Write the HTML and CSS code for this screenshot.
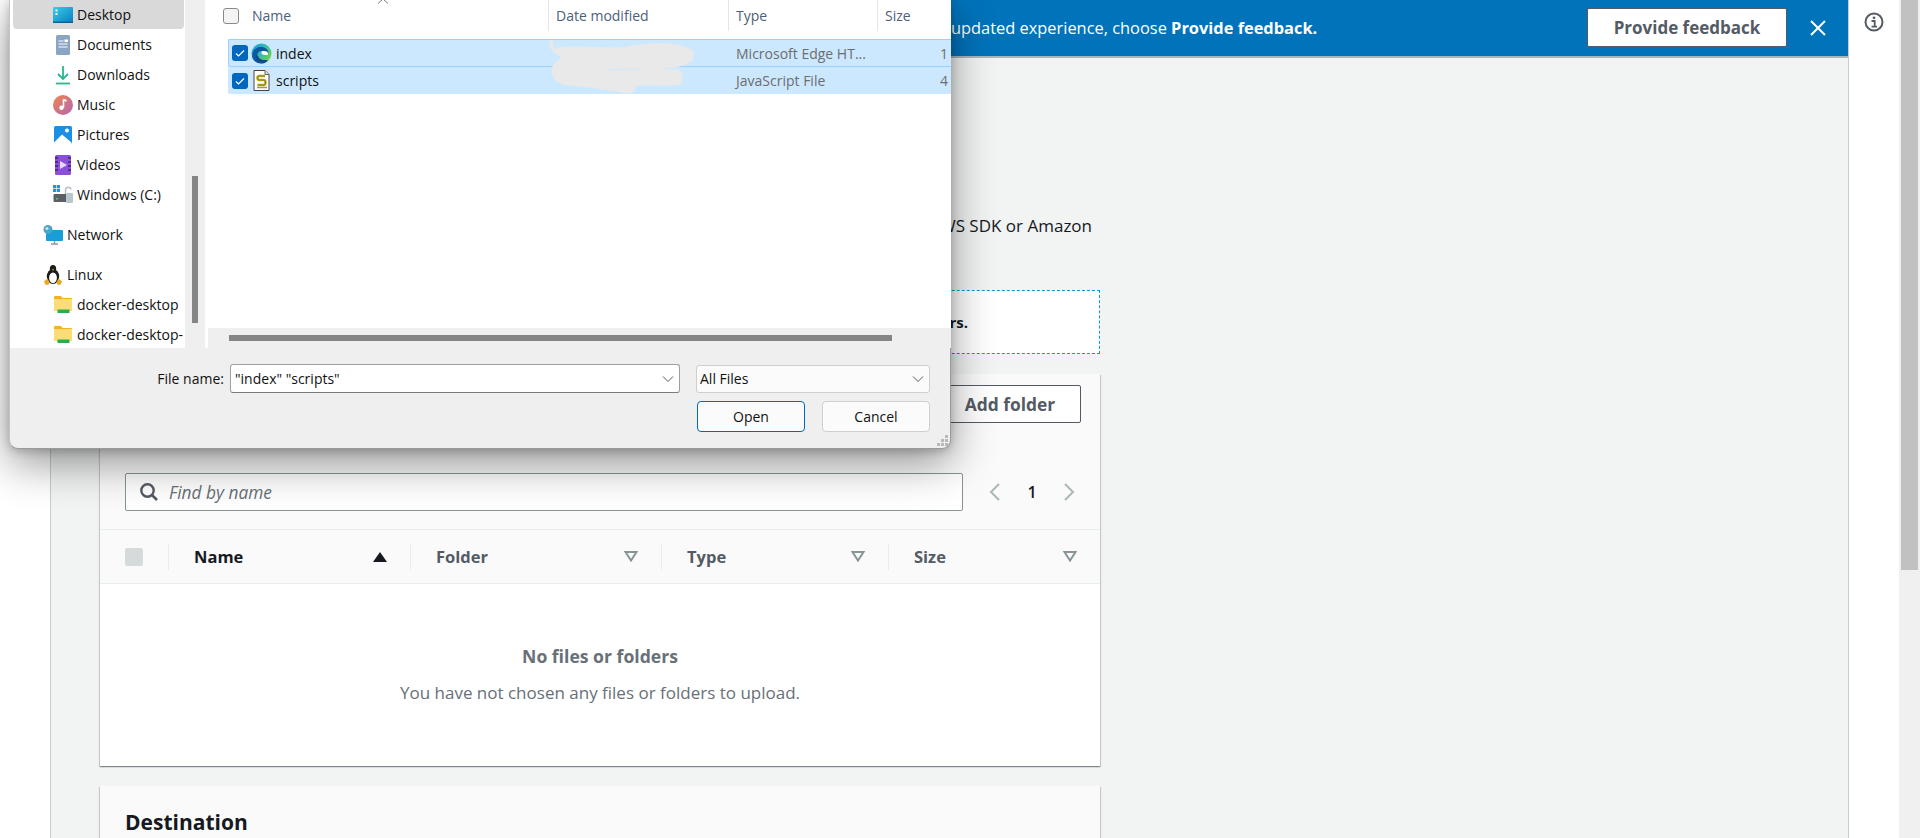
FILE: index.html
```html
<!DOCTYPE html>
<html lang="en">
<head>
<meta charset="utf-8">
<title>Upload</title>
<link rel="stylesheet" href="styles.css">
</head>
<body>
<div class="page">
  <div class="rail-left"></div>
  <main class="main">
    <div class="banner">
      <p class="banner-text">updated experience, choose <b>Provide feedback.</b></p>
      <button class="banner-btn">Provide feedback</button>
      <svg class="banner-x" width="18" height="18" viewBox="0 0 18 18"><path d="M2 2l14 14M16 2L2 16" fill="none" stroke="#fff" stroke-width="2"/></svg>
    </div>
    <div class="content">
      <p class="intro">AWS SDK or Amazon</p>
      <div class="drop"><b>rs.</b></div>
      <section class="card files">
        <div class="files-top">
          <div class="files-head">
            <div class="files-title">
              <p>All files and folders in this table will be uploaded.</p>
            </div>
            <button class="add-folder">Add folder</button>
          </div>
          <div class="search-row">
            <div class="search">
              <svg width="20" height="20" viewBox="0 0 20 20"><circle cx="8.500" cy="8.500" r="6.200" fill="none" stroke="#545b64" stroke-width="2.400"/><path d="M13 13l5 5" stroke="#545b64" stroke-width="2.600"/></svg>
              <span>Find by name</span>
            </div>
            <div class="pager">
              <svg width="14" height="20" viewBox="0 0 14 20"><path d="M11 2L3 10l8 8" fill="none" stroke="#aab7b8" stroke-width="2"/></svg>
              <b>1</b>
              <svg width="14" height="20" viewBox="0 0 14 20"><path d="M3 2l8 8-8 8" fill="none" stroke="#aab7b8" stroke-width="2"/></svg>
            </div>
          </div>
        </div>
        <div class="thead">
          <div class="th th-check"><i class="fake-check"></i></div>
          <div class="th th-name"><span>Name</span><svg width="14" height="10" viewBox="0 0 14 10"><path d="M7 0l7 10H0z" fill="#16191f"/></svg></div>
          <div class="th th-folder"><span>Folder</span><svg class="filter" width="14" height="11" viewBox="0 0 14 11"><path d="M1.500 1h11L7 9.500z" fill="none" stroke="#879596" stroke-width="2"/></svg></div>
          <div class="th th-type"><span>Type</span><svg class="filter" width="14" height="11" viewBox="0 0 14 11"><path d="M1.500 1h11L7 9.500z" fill="none" stroke="#879596" stroke-width="2"/></svg></div>
          <div class="th th-size"><span>Size</span><svg class="filter" width="14" height="11" viewBox="0 0 14 11"><path d="M1.500 1h11L7 9.500z" fill="none" stroke="#879596" stroke-width="2"/></svg></div>
        </div>
        <div class="empty">
          <b>No files or folders</b>
          <p>You have not chosen any files or folders to upload.</p>
        </div>
      </section>
      <section class="card dest">
        <h2>Destination</h2>
      </section>
    </div>
  </main>
  <aside class="rail-right">
    <svg class="info" width="20" height="20" viewBox="0 0 20 20"><circle cx="10" cy="10" r="8.500" fill="none" stroke="#545b64" stroke-width="2"/><circle cx="10" cy="5.800" r="1.400" fill="#545b64"/><path d="M7.500 9h3.200v5.200M7.500 14.600h5.500" fill="none" stroke="#545b64" stroke-width="1.800"/></svg>
  </aside>
  <div class="page-scroll"><div class="page-thumb"></div></div>
</div>

<div class="dialog">
  <div class="dlg-top">
    <nav class="nav">
      <div class="nav-item sub sel">
        <svg width="20" height="16" viewBox="0 0 20 16"><defs><linearGradient id="gd" x1="0" y1="0" x2="1" y2="1"><stop offset="0" stop-color="#35d0e8"/><stop offset="1" stop-color="#0a7cc0"/></linearGradient></defs><rect width="20" height="16" rx="1" fill="url(#gd)"/><rect x="2.500" y="2.500" width="2" height="2" fill="#fff"/><rect x="2.500" y="6" width="2" height="2" fill="#fff"/><rect y="14.600" width="20" height="1.400" fill="#0a5f96"/></svg>
        <span>Desktop</span>
      </div>
      <div class="nav-item sub">
        <svg width="20" height="20" viewBox="0 0 20 20"><rect x="3" y="0" width="14" height="20" rx="1.500" fill="#8aa4c4"/><path d="M5.500 6h5M5.500 9h9M5.500 12h9" stroke="#fff" stroke-width="1.200"/><rect x="11.500" y="4.500" width="3.500" height="2.500" fill="#fff"/></svg>
        <span>Documents</span>
      </div>
      <div class="nav-item sub">
        <svg width="20" height="20" viewBox="0 0 20 20"><path d="M10 1v13M5 9l5 5 5-5" fill="none" stroke="#25b88f" stroke-width="1.800"/><path d="M3 18.500h14" stroke="#25b88f" stroke-width="1.800"/></svg>
        <span>Downloads</span>
      </div>
      <div class="nav-item sub">
        <svg width="20" height="20" viewBox="0 0 20 20"><defs><linearGradient id="gm" x1="0" y1="0" x2="1" y2="1"><stop offset="0" stop-color="#f0864a"/><stop offset="1" stop-color="#b265b5"/></linearGradient></defs><circle cx="10" cy="10" r="10" fill="url(#gm)"/><path d="M10.500 4.500v8" stroke="#fff" stroke-width="1.600"/><path d="M10.500 4.500l3 1.500" stroke="#fff" stroke-width="1.600"/><circle cx="8.500" cy="12.800" r="2.200" fill="#fff"/></svg>
        <span>Music</span>
      </div>
      <div class="nav-item sub">
        <svg width="20" height="20" viewBox="0 0 20 20"><rect x="1" y="1" width="18" height="18" rx="1.500" fill="#1a8fe3"/><path d="M1 17.500L9 9.500l9.500 8v1.500H1z" fill="#fff"/><circle cx="14" cy="5.500" r="2" fill="#fff"/></svg>
        <span>Pictures</span>
      </div>
      <div class="nav-item sub">
        <svg width="20" height="20" viewBox="0 0 20 20"><rect x="2" y="0" width="16" height="20" rx="1.500" fill="#8a4fd8"/><path d="M2 3h3M2 7h3M2 11h3M2 15h3M15 3h3M15 7h3M15 11h3M15 15h3" stroke="#43207a" stroke-width="1.500"/><path d="M7 6l7 4-7 4z" fill="#e9d9ff"/></svg>
        <span>Videos</span>
      </div>
      <div class="nav-item sub">
        <svg width="20" height="20" viewBox="0 0 20 20"><rect x="0" y="0" width="3.200" height="3.200" fill="#1a96e6"/><rect x="3.800" y="0" width="3.200" height="3.200" fill="#1a96e6"/><rect x="0" y="3.800" width="3.200" height="3.200" fill="#1a96e6"/><rect x="3.800" y="3.800" width="3.200" height="3.200" fill="#1a96e6"/><path d="M12.500 9V4.500a2.800 2.800 0 0 1 5.500 0" fill="none" stroke="#b4bcc4" stroke-width="1.400"/><rect x="0.500" y="9" width="19" height="8" rx="1" fill="#5c6064"/><rect x="13" y="8" width="7" height="10" rx="1" fill="#b8c6d0"/><rect x="3" y="13" width="2" height="1.500" fill="#38d860"/></svg>
        <span>Windows (C:)</span>
      </div>
      <div class="nav-item top gap">
        <svg width="20" height="20" viewBox="0 0 20 20"><rect x="3" y="5" width="17" height="11" rx="1" fill="#1a9ed8"/><path d="M11.500 16v2.500M8 19h7" stroke="#8a9aa8" stroke-width="1.400"/><circle cx="5" cy="4.500" r="4.500" fill="#4aa6c8"/><circle cx="4" cy="3.500" r="1.500" fill="#cde6f2"/></svg>
        <span>Network</span>
      </div>
      <div class="nav-item top gap">
        <svg width="20" height="20" viewBox="0 0 20 20"><ellipse cx="10" cy="11.500" rx="6.200" ry="7.500" fill="#1c1c1c"/><ellipse cx="10" cy="4" rx="3.200" ry="4" fill="#1c1c1c"/><ellipse cx="10" cy="12.800" rx="3.900" ry="5.400" fill="#fff"/><path d="M8.800 4.200h2.400L10 5.800z" fill="#e8a820"/><path d="M1 16.500l3.500-3 2 3.500-1 2.800H2.500zM19 16.500l-3.500-3-2 3.500 1 2.800h3z" fill="#e8a820"/></svg>
        <span>Linux</span>
      </div>
      <div class="nav-item sub">
        <svg width="20" height="18" viewBox="0 0 20 18"><path d="M1 1a1 1 0 0 1 1-1h6l1.500 2H18a1 1 0 0 1 1 1v3H1z" fill="#f5b21b"/><rect x="1" y="3" width="18" height="12" fill="#fbdc78"/><rect x="4.500" y="13.500" width="12" height="3.500" fill="#23b14d"/></svg>
        <span>docker-desktop</span>
      </div>
      <div class="nav-item sub">
        <svg width="20" height="18" viewBox="0 0 20 18"><path d="M1 1a1 1 0 0 1 1-1h6l1.500 2H18a1 1 0 0 1 1 1v3H1z" fill="#f5b21b"/><rect x="1" y="3" width="18" height="12" fill="#fbdc78"/><rect x="4.500" y="13.500" width="12" height="3.500" fill="#23b14d"/></svg>
        <span>docker-desktop-</span>
      </div>
    </nav>
    <div class="gutter"><div class="gutter-thumb"></div></div>
    <div class="listing">
      <svg class="sort-caret" width="12" height="6" viewBox="0 0 12 6"><path d="M1 3.500L6 -1l5 4.500" fill="none" stroke="#7a7a7a" stroke-width="1"/></svg>
      <div class="list-head">
        <div class="lh lh-name"><i class="box"></i><span>Name</span></div>
        <div class="lh lh-date"><span>Date modified</span></div>
        <div class="lh lh-type"><span>Type</span></div>
        <div class="lh lh-size"><span>Size</span></div>
      </div>
      <div class="rows">
        <div class="row focus">
          <i class="chk"><svg width="12" height="12" viewBox="0 0 12 12"><path d="M2 6.500l2.500 2.500L10 3.500" fill="none" stroke="#fff" stroke-width="1.200"/></svg></i>
          <svg class="ficon" width="21" height="21" viewBox="0 0 21 21"><defs><linearGradient id="ge" x1="0" y1="0" x2="1" y2="0.600"><stop offset="0" stop-color="#1b9de2"/><stop offset="0.600" stop-color="#35c1a8"/><stop offset="1" stop-color="#6fd14a"/></linearGradient></defs><circle cx="10.500" cy="10.500" r="10" fill="url(#ge)"/><path d="M1 13C1.500 6 7 3 12 4c4 1 6 4 5.500 7.500-2 .8-6 .8-7-.8-.6-1.200.2-2.200 1-2.700-3.500-.500-6 2.500-5 6 1 3.500 5 5.300 10 3.500C14.500 20 12.500 20.500 10.500 20.500 5.500 20.500 1.500 17.500 1 13z" fill="#0c59a4"/><path d="M7 12.500c.5 3 3.500 5 8 4.500l2 .8c-2 2-6 2.700-9 1.200-3-1.500-4-4.500-3-6.500z" fill="#114a8b"/><path d="M11.500 8c3-.5 6 .5 6 3.500-2 .8-6 .8-7-.8-.6-1.200.2-2.200 1-2.700z" fill="#fff"/></svg>
          <span class="fname">index</span>
          <span class="ftype">Microsoft Edge HT...</span>
          <span class="fsize">1</span>
        </div>
        <div class="row second">
          <i class="chk"><svg width="12" height="12" viewBox="0 0 12 12"><path d="M2 6.500l2.500 2.500L10 3.500" fill="none" stroke="#fff" stroke-width="1.200"/></svg></i>
          <svg class="ficon" width="21" height="21" viewBox="0 0 21 21"><path d="M3 .5h11l4 4v16H3z" fill="#fff" stroke="#444" stroke-width="1"/><path d="M14 .5v4h4" fill="#ddd" stroke="#666" stroke-width="1"/><path d="M14 6H8C6 6 6 10 8 10h5c2 0 2 5 0 5H6.500" fill="none" stroke="#c8b820" stroke-width="2.600"/><path d="M14 6H8C6 6 6 10 8 10h5c2 0 2 5 0 5H6.500" fill="none" stroke="#5a5a30" stroke-width="0.700"/><path d="M6 17.500h10" stroke="#9a9a60" stroke-width="1.500"/></svg>
          <span class="fname">scripts</span>
          <span class="ftype">JavaScript File</span>
          <span class="fsize">4</span>
        </div>
        <svg class="redact" width="160" height="60" viewBox="0 0 160 60"><path d="M8 8C40 4 70 10 84 6c24-5 62-4 64 8 1 10-12 14-36 15-24 0-40-1-52 1 20 1 50-3 73 0 5 2 5 14-1 15-14 2-35-1-42 1-1 6-4 9-12 7-14-3-32-5-58-8-13-1-19-15-10-23 3-3 5-4 4-6-9-2-14-14-8-17z" fill="#e9e9e9"/></svg>
      </div>
      <div class="h-scroll"><div class="h-thumb"></div></div>
    </div>
  </div>
  <div class="dlg-bottom">
    <div class="fn-row">
      <label class="fn-label">File name:</label>
      <div class="fn-input"><span>"index" "scripts"</span><svg width="12" height="8" viewBox="0 0 12 8"><path d="M1 1.500l5 5 5-5" fill="none" stroke="#555" stroke-width="1"/></svg></div>
      <div class="fn-combo"><span>All Files</span><svg width="12" height="8" viewBox="0 0 12 8"><path d="M1 1.500l5 5 5-5" fill="none" stroke="#555" stroke-width="1"/></svg></div>
    </div>
    <div class="btn-row">
      <button class="win-btn primary">Open</button>
      <button class="win-btn">Cancel</button>
    </div>
    <svg class="grip" width="12" height="12" viewBox="0 0 12 12"><path d="M8 0h3v3H8zM4 4h3v3H4zM8 4h3v3H8zM0 8h3v3H0zM4 8h3v3H4zM8 8h3v3H8z" fill="#b9b9b9"/></svg>
  </div>
</div>
</body>
</html>
```

FILE: styles.css
```css
* { box-sizing: border-box; }
html, body { margin: 0; height: 100%; overflow: hidden; }
body { background: #fff; font-family: "Open Sans", "Noto Sans", sans-serif; color: #16191f; }
button { font-family: inherit; }
p, h2 { margin: 0; }

.page { display: flex; height: 838px; width: 1920px; overflow: hidden; }
.rail-left { width: 50px; flex: none; background: #fff; }
.main { width: 1799px; flex: none; background: #f2f3f3; border-left: 1px solid #c6cdcd; border-right: 1px solid #c6cdcd; height: 838px; overflow: hidden; }
.rail-right { width: 50px; flex: none; background: #fff; padding: 12px 0 0 15px; }
.page-scroll { width: 21px; flex: none; background: #f0f0f0; padding: 0 2px; }
.page-thumb { height: 570px; background: #c1c1c1; }

.banner { height: 58px; background: #0073bb; border-bottom: 2px solid #aab7b8; display: flex; align-items: center; padding: 0 21px 0 900px; color: #fff; font-size: 16.400px; }
.banner-text { flex: 1; white-space: nowrap; margin-bottom: 2px; }
.banner-btn { width: 200px; height: 39px; background: #fff; border: 1px solid #545b64; border-radius: 2px; color: #545b64; font-weight: 700; font-size: 17px; padding: 0; margin-bottom: 1px; }
.banner-x { margin-left: 22px; }

.content { padding: 0 0 0 49px; width: 1049px; }
.intro { height: 170px; padding-top: 156px; text-align: right; font-size: 17px; line-height: 24px; white-space: nowrap; padding-right: 8px; }
.drop { height: 64px; margin-top: 62px; border: 1px dashed #00a1c9; background: #fff; text-align: right; padding: 19px 131px 0 0; font-size: 15px; line-height: 24px; }

.card { background: #fff; box-shadow: 0 1px 1px rgba(0,28,36,.3), 1px 1px 1px rgba(0,28,36,.15), -1px 1px 1px rgba(0,28,36,.15); }
.files { margin-top: 20px; height: 392px; display: flex; flex-direction: column; }
.files-top { background: #fafafa; height: 156px; border-bottom: 1px solid #eaeded; padding: 11px 19px 0 25px; }
.files-head { display: flex; justify-content: space-between; height: 88px; }
.files-title { padding-top: 44px; }
.files-title p { font-size: 14px; line-height: 20px; color: #545b64; white-space: nowrap; }
.add-folder { width: 142px; height: 38px; background: #fff; border: 1px solid #545b64; border-radius: 2px; color: #545b64; font-weight: 700; font-size: 17.400px; padding: 0; }
.search-row { display: flex; align-items: center; }
.search { width: 838px; height: 38px; background: #fff; border: 1px solid #879596; border-radius: 2px; display: flex; align-items: center; gap: 10px; padding-left: 13px; font-style: italic; font-size: 17.300px; color: #687078; }
.pager { display: flex; align-items: center; margin-left: 25px; font-size: 16px; }
.pager b { width: 60px; text-align: center; font-weight: 600; }

.thead { height: 54px; background: #fafafa; border-bottom: 1px solid #eaeded; display: grid; grid-template-columns: 68px 242px 251px 227px 212px; align-items: center; font-size: 16.500px; font-weight: 700; color: #545b64; }
.th { display: flex; align-items: center; justify-content: space-between; height: 26px; border-left: 1px solid #eaeded; padding: 0 23px 0 25px; }
.th-check { border-left: 0; padding: 0 0 0 25px; justify-content: flex-start; }
.th-name { color: #16191f; }
.fake-check { display: block; width: 18px; height: 18px; background: #d5dbdb; border-radius: 2px; }
.empty { flex: 1; text-align: center; padding-top: 60px; font-size: 17px; color: #687078; }
.empty b { display: block; line-height: 24px; color: #687078; font-weight: 700; font-size: 17.600px; }
.empty p { margin-top: 13px; line-height: 24px; }

.dest { margin-top: 20px; height: 120px; background: #fafafa; padding: 21px 25px; }
.dest h2 { font-size: 21px; line-height: 30px; }

.dialog { position: absolute; left: 9px; top: 0; width: 942px; height: 449px; background: #efefef; border-radius: 0 0 9px 9px; border: 1px solid #9a9a9a; border-top: 0; border-left-color: #c4c4c4; box-shadow: 0 14px 44px rgba(0,0,0,.42), 0 2px 10px rgba(0,0,0,.2); font-family: "Open Sans", "Noto Sans", sans-serif; font-size: 14px; color: #111; display: flex; flex-direction: column; }
.dlg-top { display: flex; height: 348px; flex: none; }
.nav { width: 175px; flex: none; background: #fff; overflow: hidden; }
.nav-item { height: 30px; display: flex; align-items: center; gap: 4px; white-space: nowrap; overflow: hidden; }
.nav-item svg { flex: none; }
.nav-item span { margin-bottom: 2px; }
.sub { padding-left: 43px; }
.top { padding-left: 33px; }
.gap { margin-top: 10px; }
.sel { background: #d9d9d9; border-radius: 0 0 4px 4px; margin: 0 1px 1px 3px; padding-left: 40px; height: 29px; }
.sel span { margin-bottom: 0; }
.gutter { width: 20px; flex: none; background: #efefef; padding: 176px 0 0 7px; }
.gutter-thumb { width: 6px; height: 147px; background: #858585; }
.listing { width: 746px; height: 348px; position: relative; display: flex; flex-direction: column; background: #fff; }
.sort-caret { position: absolute; left: 172px; top: 0; }
.list-head { height: 31px; display: grid; grid-template-columns: 343px 180px 149px 74px; color: #4c607a; font-size: 14px; flex: none; }
.lh { display: flex; align-items: center; padding-left: 7px; border-left: 1px solid #e5e5e5; }
.lh-name { border-left: 0; padding-left: 18px; gap: 13px; }
.box { display: block; width: 16px; height: 16px; border: 1px solid #8a8a8a; border-radius: 3px; background: #f4f4f4; }
.rows { position: relative; height: 297px; flex: none; padding: 8px 0 0 20px; background: #fff; border-left: 3px solid #fff; }
.row { height: 28px; width: 723px; background: #cce8ff; display: flex; align-items: center; padding-left: 4px; white-space: nowrap; border-radius: 2px 0 0 2px; }
.row span { margin-bottom: 1px; }
.row.focus span { margin-bottom: 0; }
.row.focus { border: 1px solid #99d1ff; border-right: 0; padding-left: 3px; }
.row.second { height: 27px; }
.chk { display: flex; align-items: center; justify-content: center; width: 16px; height: 16px; background: #0067c0; border-radius: 3px; flex: none; }
.ficon { flex: none; margin: 0 4px 0 3px; }
.fname { width: 329px; color: #111; }
.row .ftype { color: #6d6d6d; width: 148px; margin-left: 131px; }
.row .fsize { color: #6d6d6d; margin-left: 54px; width: 10px; text-align: right; }
.redact { position: absolute; left: 338px; top: 9px; }
.h-scroll { height: 20px; margin-left: 3px; background: #efefef; padding: 7px 0 0 21px; flex: none; }
.h-thumb { width: 663px; height: 6px; background: #858585; }

.dlg-bottom { flex: 1; position: relative; padding: 16px 20px 0 0; }
.fn-row { display: flex; align-items: center; height: 29px; }
.fn-label { width: 220px; text-align: right; padding-right: 6px; }
.fn-input { width: 450px; height: 29px; background: #fff; border: 1px solid #a0a0a0; border-bottom-color: #7a7a7a; border-radius: 3px; display: flex; align-items: center; justify-content: space-between; padding: 0 5px 0 4px; }
.fn-combo { width: 234px; height: 28px; margin-left: 16px; background: #fbfbfb; border: 1px solid #cfcfcf; border-radius: 3px; display: flex; align-items: center; justify-content: space-between; padding: 0 5px 0 3px; }
.btn-row { display: flex; justify-content: flex-end; gap: 17px; margin-top: 8px; }
.win-btn { width: 108px; height: 31px; background: #fbfbfb; border: 1px solid #d0d0d0; border-radius: 4px; font-size: 14px; color: #111; padding: 0; }
.win-btn.primary { border: 1px solid #0067c0; }
.grip { position: absolute; right: 1px; bottom: 1px; }
```
